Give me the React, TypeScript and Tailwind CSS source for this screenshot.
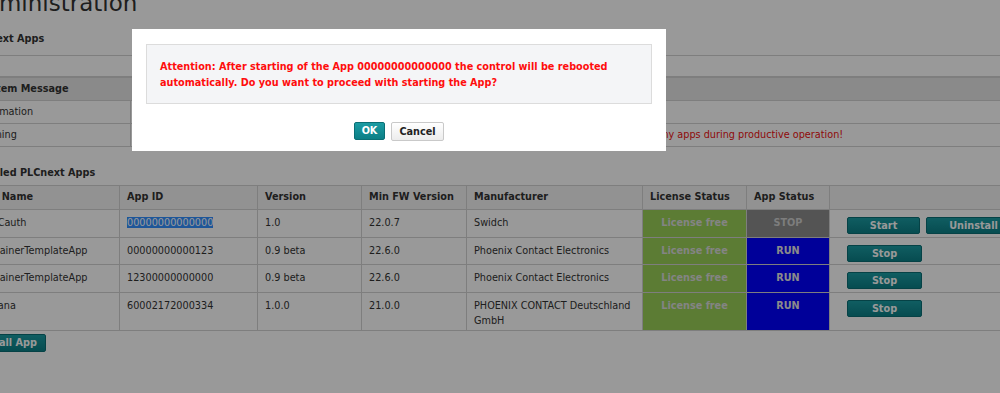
import React from "react";

interface AppRow {
  name: string;
  id: string;
  version: string;
  minFw: string;
  manufacturer: string;
  running: boolean;
  selected?: boolean;
  height: string;
}

const apps: AppRow[] = [
  { name: "SMSCauth", id: "00000000000000", version: "1.0", minFw: "22.0.7", manufacturer: "Swidch", running: false, selected: true, height: "h-[28px]" },
  { name: "ContainerTemplateApp", id: "00000000000123", version: "0.9 beta", minFw: "22.6.0", manufacturer: "Phoenix Contact Electronics", running: true, height: "h-[27px]" },
  { name: "ContainerTemplateApp", id: "12300000000000", version: "0.9 beta", minFw: "22.6.0", manufacturer: "Phoenix Contact Electronics", running: true, height: "h-[28px]" },
  { name: "Grafana", id: "60002172000334", version: "1.0.0", minFw: "21.0.0", manufacturer: "PHOENIX CONTACT Deutschland GmbH", running: true, height: "h-[38px]" },
];

const tealBtn =
  "h-[17px] rounded-[2px] border border-[#0a6f75] bg-gradient-to-b from-[#1b9ca3] to-[#0b7f86] text-white font-bold leading-[15px] text-center";

const cell = "border border-[#d2d2d2] px-[7px] align-top pt-[5px] leading-[15px]";
const headCell = "border border-[#d2d2d2] px-[7px] align-middle font-bold text-left";

export default function App() {
  return (
    <div className="relative w-[1000px] h-[393px] overflow-hidden bg-white font-['DejaVu_Sans',Verdana,sans-serif] text-[9.7px] text-[#333]">
      <div className="-ml-[31px] w-[1060px]">
        {/* page title, scrolled partly out of view */}
        <div className="flex h-[15px] flex-col">
          <h1 className="-mt-[8px] text-[23px] leading-[23px] font-normal text-[#333]">Administration</h1>
        </div>

        <h2 className="mt-[13px] h-[21px] leading-[21px] font-bold">PLCnext Apps</h2>
        <div className="mt-[6px] h-[22px] border-y border-[#d2d2d2]" />

        <table className="w-full table-fixed border-collapse">
          <colgroup>
            <col className="w-[161px]" />
            <col />
          </colgroup>
          <thead>
            <tr>
              <th colSpan={2} className="h-[23px] border border-[#d2d2d2] bg-[#e6e6e6] px-[7px] text-left font-bold">
                System Message
              </th>
            </tr>
          </thead>
          <tbody>
            <tr>
              <td className="h-[23px] border border-[#d2d2d2] px-[7px]">Information</td>
              <td className="border border-[#d2d2d2] px-[7px]" />
            </tr>
            <tr>
              <td className="h-[23px] border border-[#d2d2d2] px-[7px]">Warning</td>
              <td className="border border-[#d2d2d2] px-[7px] text-[#ee1111] whitespace-nowrap">
                Warning: Installing, starting, stopping or uninstalling an app may also restart the controller. Do not modify any apps during productive operation!
              </td>
            </tr>
          </tbody>
        </table>

        <h2 className="mt-[15px] h-[21px] leading-[21px] font-bold">Installed PLCnext Apps</h2>

        <table className="mt-[2px] w-full table-fixed border-collapse">
          <colgroup>
            <col className="w-[150px]" />
            <col className="w-[138px]" />
            <col className="w-[104px]" />
            <col className="w-[105px]" />
            <col className="w-[176px]" />
            <col className="w-[104px]" />
            <col className="w-[83px]" />
            <col />
          </colgroup>
          <thead>
            <tr className="bg-[#f4f4f4]">
              <th className={`${headCell} h-[24px]`}>App Name</th>
              <th className={headCell}>App ID</th>
              <th className={headCell}>Version</th>
              <th className={headCell}>Min FW Version</th>
              <th className={headCell}>Manufacturer</th>
              <th className={`${headCell} text-center`}>License Status</th>
              <th className={`${headCell} text-center`}>App Status</th>
              <th className={headCell} />
            </tr>
          </thead>
          <tbody>
            {apps.map((app, i) => (
              <tr key={i}>
                <td className={`${cell} ${app.height}`}>{app.name}</td>
                <td className={cell}>
                  {app.selected ? <span className="bg-[#3390ff] text-white">{app.id}</span> : app.id}
                </td>
                <td className={cell}>{app.version}</td>
                <td className={cell}>{app.minFw}</td>
                <td className={cell}>{app.manufacturer}</td>
                <td className={`${cell} bg-[#99cf58] text-center font-bold text-[#dcdcdc]`}>License free</td>
                <td
                  className={`${cell} text-center font-bold ${
                    app.running ? "bg-[#0000ff] text-[#e8e8e8]" : "bg-[#8c8c8c] text-[#d0d0d0]"
                  }`}
                >
                  {app.running ? "RUN" : "STOP"}
                </td>
                <td className={`${cell} pl-[17px]`}>
                  <div className="mt-[2px] flex gap-[6px]">
                    {app.running ? (
                      <button type="button" className={`${tealBtn} w-[75px]`}>Stop</button>
                    ) : (
                      <>
                        <button type="button" className={`${tealBtn} w-[75px]`}>Start</button>
                        <button type="button" className={`${tealBtn} w-[95px] shrink-0`}>Uninstall</button>
                      </>
                    )}
                  </div>
                </td>
              </tr>
            ))}
          </tbody>
        </table>

        <button
          type="button"
          className="mt-[3px] h-[18px] w-[77px] rounded-[2px] border border-[#0a6f75] bg-gradient-to-b from-[#1b9ca3] to-[#0b7f86] text-white font-bold leading-[16px]"
        >
          Install App
        </button>
      </div>

      {/* modal backdrop */}
      <div className="absolute inset-0 bg-black/40" />

      {/* confirm dialog */}
      <div className="absolute left-[132px] top-[29px] w-[534px] h-[122px] bg-white px-[14px] pt-[15px]">
        <div className="h-[60px] border border-[#dcdcdc] bg-[#f4f5f7] px-[13px] pt-[14px] leading-[16px] font-bold text-[#ff0d0d]">
          Attention: After starting of the App 00000000000000 the control will be rebooted automatically. Do you want to proceed with starting the App?
        </div>
        <div className="mt-[18px] flex justify-center gap-[6px]">
          <button
            type="button"
            className="h-[18px] w-[31px] rounded-[2px] border border-[#0a6f75] bg-gradient-to-b from-[#1b9ca3] to-[#0b7f86] text-white font-bold leading-[16px]"
          >
            OK
          </button>
          <button
            type="button"
            className="h-[19px] w-[53px] rounded-[2px] border border-[#c9c9c9] bg-gradient-to-b from-white to-[#ececec] text-[#222] font-bold leading-[17px]"
          >
            Cancel
          </button>
        </div>
      </div>
    </div>
  );
}
